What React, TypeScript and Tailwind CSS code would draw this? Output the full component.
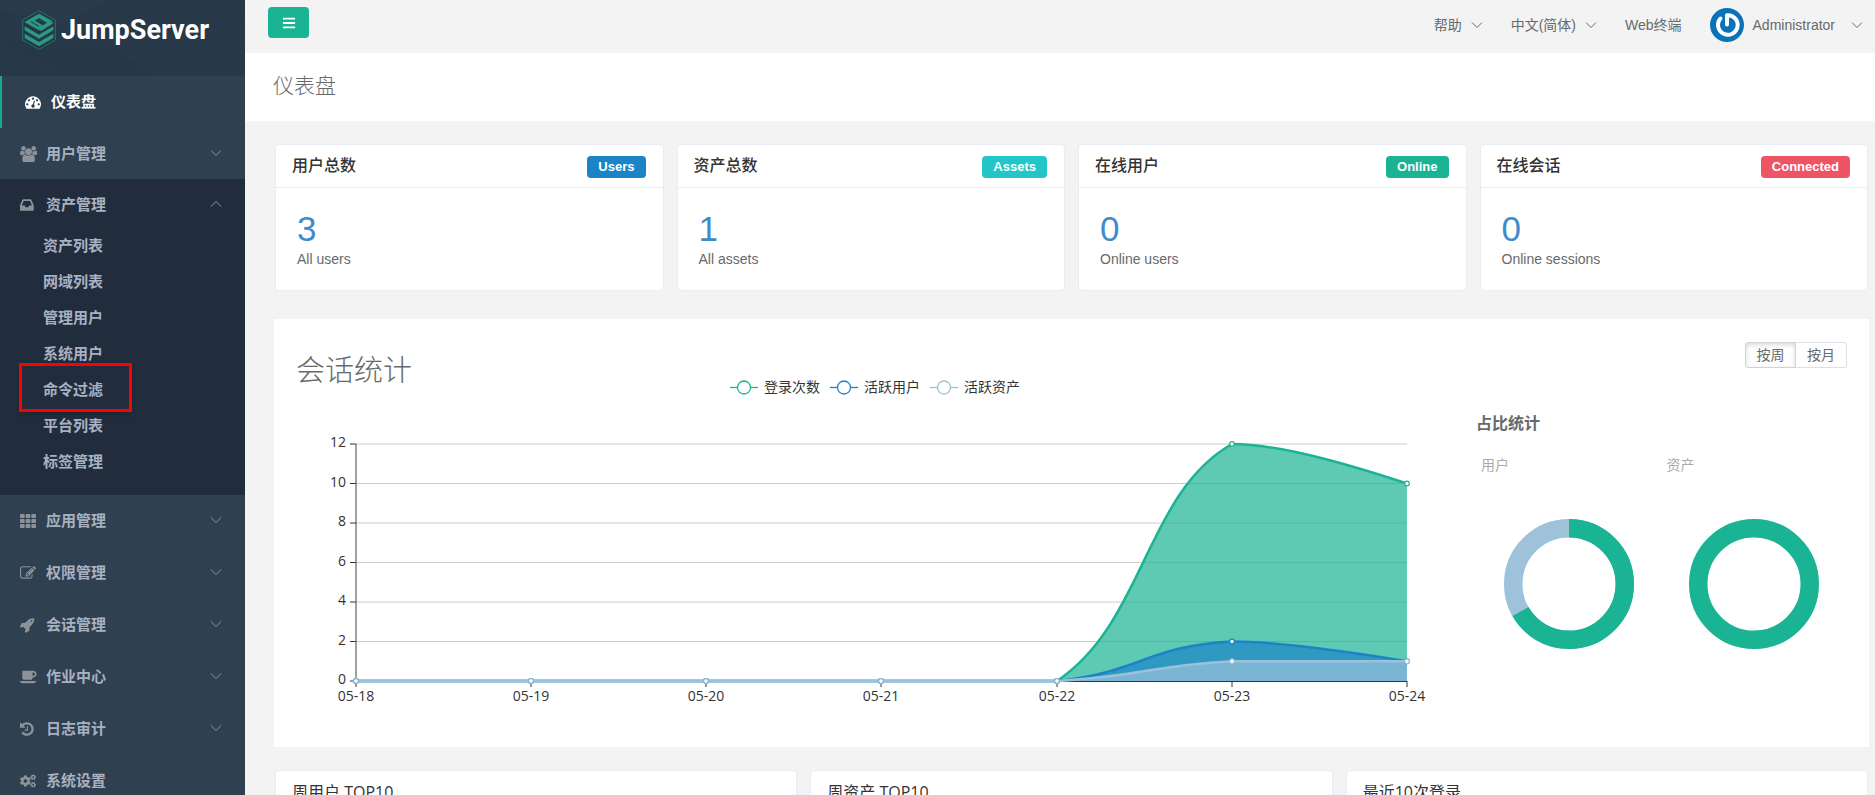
import React from "react";
import { FaTh, FaCogs, FaBars } from "react-icons/fa";

const SANS = "font-['Liberation_Sans','Noto_Sans_CJK_SC',sans-serif]";
const HUMAN = "font-['Open_Sans','Noto_Sans_CJK_SC',sans-serif]";

const glyphs = {
  gauge: {
    box: "0 0 1792 1792",
    d: "M384 1152q0-53-37.500-90.500t-90.500-37.500-90.500 37.500-37.500 90.500 37.500 90.500 90.500 37.500 90.500-37.500 37.500-90.500zm192-448q0-53-37.500-90.500t-90.500-37.500-90.500 37.500-37.500 90.500 37.500 90.500 90.500 37.500 90.500-37.500 37.500-90.500zm428 481l101-382q6-26-7.500-48.500t-38.500-29.500-48 6.500-30 39.500l-101 382q-60 5-107 43.500t-63 98.500q-20 77 20 146t117 89 146-20 89-117q16-60-6-117t-72-91zm660-33q0-53-37.500-90.500t-90.500-37.500-90.500 37.500-37.500 90.500 37.500 90.500 90.500 37.500 90.500-37.500 37.500-90.500zm-640-640q0-53-37.500-90.500t-90.500-37.500-90.500 37.500-37.500 90.500 37.500 90.500 90.500 37.500 90.500-37.500 37.500-90.500zm448 192q0-53-37.500-90.500t-90.500-37.500-90.500 37.500-37.500 90.500 37.500 90.500 90.500 37.500 90.500-37.500 37.500-90.500zm320 448q0 261-141 483-19 29-54 29h-1402q-35 0-54-29-141-221-141-483 0-182 71-348t191-286 286-191 348-71 348 71 286 191 191 286 71 348z",
  },
  users: {
    box: "0 0 1920 1792",
    d: "M593 896q-162 5-265 128h-134q-82 0-138-40.500t-56-118.500q0-353 124-353 6 0 43.500 21t97.500 42.500 119 21.500q67 0 133-23-5 37-5 66 0 139 81 256zm1071 637q0 120-73 189.500t-194 69.500h-874q-121 0-194-69.500t-73-189.500q0-53 3.500-103.500t14-109 26.500-108.500 43-97.500 62-81 85.500-53.500 111.500-20q10 0 43 21.500t73 48 107 48 135 21.500 135-21.500 107-48 73-48 43-21.500q61 0 111.500 20t85.500 53.500 62 81 43 97.500 26.500 108.500 14 109 3.500 103.500zm-1024-1277q0 106-75 181t-181 75-181-75-75-181 75-181 181-75 181 75 75 181zm704 384q0 159-112.500 271.500t-271.500 112.500-271.500-112.500-112.500-271.500 112.500-271.500 271.500-112.500 271.500 112.500 112.500 271.500zm576 225q0 78-56 118.500t-138 40.500h-134q-103-123-265-128 81-117 81-256 0-29-5-66 66 23 133 23 59 0 119-21.500t97.500-42.500 43.500-21q124 0 124 353zm-128-609q0 106-75 181t-181 75-181-75-75-181 75-181 181-75 181 75 75 181z",
  },
  inbox: {
    box: "128 0 1792 1792",
    d: "M1151 960h316q-1-3-2.500-8.500t-2.500-7.500l-212-496h-708l-212 496q-1 3-2.500 8.500t-2.500 7.500h316l95 192h320zm513 30v482q0 26-19 45t-45 19h-1408q-26 0-45-19t-19-45v-482q0-62 25-123l238-552q10-25 36.500-42t52.500-17h832q26 0 52.500 17t36.500 42l238 552q25 61 25 123z",
  },
  edit: {
    box: "0 0 1792 1792",
    d: "M888 1184l116-116-152-152-116 116v56h96v96h56zm440-720q-16-16-33 1l-350 350q-17 17-1 33t33-1l350-350q17-17 1-33zm80 594v190q0 119-84.500 203.500t-203.500 84.500h-832q-119 0-203.500-84.500t-84.500-203.500v-832q0-119 84.500-203.500t203.500-84.500h832q63 0 117 25 15 7 18 23 3 17-9 29l-49 49q-14 14-32 8-23-6-45-6h-832q-66 0-113 47t-47 113v832q0 66 47 113t113 47h832q66 0 113-47t47-113v-126q0-13 9-22l64-64q15-15 35-7t20 29zm-96-738l288 288-672 672h-288v-288zm444 132l-92 92-288-288 92-92q28-28 68-28t68 28l152 152q28 28 28 68t-28 68z",
  },
  rocket: {
    box: "64 0 1792 1792",
    d: "M1440 448q0-40-28-68t-68-28-68 28-28 68 28 68 68 28 68-28 28-68zm224-288q0 249-75.500 430.500t-253.500 360.500q-81 80-195 176l-20 379q-2 16-16 26l-384 224q-7 4-16 4-12 0-23-9l-64-64q-13-14-8-32l85-276-281-281-276 85q-3 1-9 1-14 0-23-9l-64-64q-17-19-5-39l224-384q10-14 26-16l379-20q96-114 176-195 188-187 358-258t431-71q14 0 24 9.500t10 22.500z",
  },
  coffee: {
    box: "0 0 1920 1792",
    d: "M1664 576q0-80-56-136t-136-56h-64v384h64q80 0 136-56t56-136zm-1664 768h1792q0 106-75 181t-181 75h-1280q-106 0-181-75t-75-181zm1856-768q0 159-112.500 271.500t-271.500 112.500h-64v32q0 92-66 158t-158 66h-704q-92 0-158-66t-66-158v-736q0-26 19-45t45-19h1152q159 0 271.500 112.500t112.500 271.500z",
  },
  history: {
    box: "128 0 1792 1792",
    d: "M1664 896q0 156-61 298t-164 245-245 164-298 61q-172 0-327-72.500t-264-204.500q-7-10-6.500-22.500t8.500-20.500l137-138q10-9 25-9 16 2 23 12 73 95 179 147t225 52q104 0 198.500-40.500t163.500-109.500 109.500-163.500 40.500-198.500-40.500-198.500-109.500-163.500-163.500-109.500-198.500-40.500q-98 0-188 35.500t-160 101.500l137 138q31 30 14 69-17 40-59 40h-448q-26 0-45-19t-19-45v-448q0-42 40-59 39-17 69 14l130 129q107-101 244.500-156.500t284.500-55.500q156 0 298 61t245 164 164 245 61 298zm-640-288v448q0 14-9 23t-23 9h-320q-14 0-23-9t-9-23v-64q0-14 9-23t23-9h224v-352q0-14 9-23t23-9h64q14 0 23 9t9 23z",
  },
};

function Glyph({ name }: { name: keyof typeof glyphs }) {
  const g = glyphs[name];
  return (
    <svg className="h-4 w-auto" viewBox={g.box} fill="currentColor" aria-hidden="true">
      <path d={g.d} />
    </svg>
  );
}

function Chevron({ up = false }: { up?: boolean }) {
  return (
    <svg width="12" height="8" viewBox="0 0 12 8" fill="none" stroke="currentColor" strokeWidth="1" aria-hidden="true">
      <path d={up ? "M1 6.5 6 1.5 11 6.5" : "M1 1.5 6 6.5 11 1.5"} />
    </svg>
  );
}

function Logo() {
  return (
    <svg width="34" height="40" viewBox="0 0 102 120" fill="none" aria-hidden="true">
      <path d="M51 2 100 30V90L51 118 2 90V30Z" stroke="#23746b" strokeWidth="3" />
      <path
        d="M8 36 51 11 92 34 80 41 51 24 38 32 62 46Q68 50 62 54L51 61 8 37ZM26 36 50 50 52 48 28 34Z"
        fill="#2a9a80"
        fillRule="evenodd"
      />
      <path d="M62 46 84 34 94 40 57 63 45 56Z" fill="#2a9a80" />
      <path d="M8 49 51 74 94 49V61L51 86 8 61Z" fill="#2a9a80" />
      <path d="M8 71 51 96 94 71V84L51 109 8 84Z" fill="#2a9a80" />
    </svg>
  );
}

function Avatar() {
  return (
    <svg width="34" height="34" viewBox="0 0 34 34" fill="none" aria-hidden="true">
      <circle cx="17" cy="17" r="17" fill="#0a73b8" />
      <path d="M10.500 10.500a9.800 9.800 0 1 0 6.500-3.300v9.300" stroke="#fff" strokeWidth="4" strokeLinecap="round" strokeLinejoin="round" />
    </svg>
  );
}

const assetItems = ["资产列表", "网域列表", "管理用户", "系统用户", "命令过滤", "平台列表", "标签管理"];

function NavRow({ icon, label, chevron }: { icon: React.ReactNode; label: string; chevron?: "up" | "down" }) {
  return (
    <a href="#" className="flex h-[52px] items-center pr-[23px] pl-5 text-[#a7b1c2]">
      <span className="w-[26px] text-[#8d9299]">{icon}</span>
      <span className="flex-1">{label}</span>
      {chevron && (
        <span className="pb-[3px] text-[#8d97a3]">
          <Chevron up={chevron === "up"} />
        </span>
      )}
    </a>
  );
}

function Sidebar() {
  return (
    <aside className="w-[245px] shrink-0 overflow-hidden bg-[#2f4050] text-[15px] font-semibold">
      <div className="relative h-[76px] overflow-hidden bg-[#273848]">
        <svg className="absolute inset-0 h-full w-full" viewBox="0 0 245 76" preserveAspectRatio="none" aria-hidden="true">
          <path d="M0 0H110L60 26 0 10Z" fill="#293a4a" />
          <path d="M120 52 152 76H245V20Z" fill="#283a49" />
          <path d="M0 40 70 76H152L120 52Z" fill="#263747" />
        </svg>
        <a href="#" className="relative flex items-center gap-[5px] pt-[10px] pl-[22px] text-white">
          <Logo />
          <span className="font-['Roboto',sans-serif] text-[27px] leading-8 font-bold">JumpServer</span>
        </a>
      </div>
      <nav>
        <a href="#" className="flex h-[52px] items-center border-l-2 border-[#19aa8d] pl-[23px] text-white">
          <span className="w-[26px]">
            <Glyph name="gauge" />
          </span>
          仪表盘
        </a>
        <NavRow icon={<Glyph name="users" />} label="用户管理" chevron="down" />
        <div className="relative -mt-px bg-[#212d3c] pb-[15px]">
          <NavRow icon={<Glyph name="inbox" />} label="资产管理" chevron="up" />
          <ul className="-mt-[3px]">
            {assetItems.map((item) => (
              <li key={item} className="relative">
                <a href="#" className="flex h-9 items-center pl-[43px] text-[#a7b1c2]">
                  {item}
                </a>
                {item === "命令过滤" && (
                  <span className="pointer-events-none absolute -top-[9px] left-[19px] h-[49px] w-[113px] border-3 border-[#fe0000] shadow-md" />
                )}
              </li>
            ))}
          </ul>
        </div>
        <NavRow icon={<FaTh size={16} />} label="应用管理" chevron="down" />
        <NavRow icon={<Glyph name="edit" />} label="权限管理" chevron="down" />
        <NavRow icon={<Glyph name="rocket" />} label="会话管理" chevron="down" />
        <NavRow icon={<Glyph name="coffee" />} label="作业中心" chevron="down" />
        <NavRow icon={<Glyph name="history" />} label="日志审计" chevron="down" />
        <NavRow icon={<FaCogs size={16} />} label="系统设置" />
      </nav>
    </aside>
  );
}

function TopBar() {
  return (
    <header className="flex h-[53px] items-start justify-between pt-[7px] pr-3 pl-[23px] text-sm text-[#676a6c]">
      <button type="button" aria-label="菜单" className="flex h-[31px] w-[41px] items-center justify-center rounded bg-[#1ab394] text-white">
        <FaBars size={14} />
      </button>
      <div className="flex h-9 items-center gap-7">
        <button type="button" className="flex items-center gap-[9px]">
          帮助 <Chevron />
        </button>
        <button type="button" className="flex items-center gap-[9px]">
          中文(简体) <Chevron />
        </button>
        <a href="#">Web终端</a>
        <button type="button" className="flex items-center gap-[9px]">
          <Avatar />
          Administrator
          <span className="ml-[7px]">
            <Chevron />
          </span>
        </button>
      </div>
    </header>
  );
}

const stats = [
  { title: "用户总数", badge: "Users", color: "bg-[#1c84c6]", value: 3, note: "All users" },
  { title: "资产总数", badge: "Assets", color: "bg-[#23c6c8]", value: 1, note: "All assets" },
  { title: "在线用户", badge: "Online", color: "bg-[#1ab394]", value: 0, note: "Online users" },
  { title: "在线会话", badge: "Connected", color: "bg-[#ed5565]", value: 0, note: "Online sessions" },
];

function StatCard({ title, badge, color, value, note }: (typeof stats)[number]) {
  return (
    <section className="rounded border border-[#e9ecf4] bg-white">
      <div className="flex h-[43px] items-center justify-between border-b border-[#e9ecf4] pr-[17px] pl-4">
        <h2 className="text-base leading-5 font-medium text-[#333]">{title}</h2>
        <span className={`mt-[2px] rounded px-[11px] text-[13px] leading-[22px] font-bold text-white ${color}`}>{badge}</span>
      </div>
      <div className="px-[21px] pt-[23px] pb-[21px]">
        <a href="#" className="block text-[35px] leading-9 text-[#428bca]">
          {value}
        </a>
        <p className="mt-[2px] text-sm leading-5 text-[#676a6c]">{note}</p>
      </div>
    </section>
  );
}

const legend = [
  { label: "登录次数", color: "#1ab394" },
  { label: "活跃用户", color: "#1c84c6" },
  { label: "活跃资产", color: "#9bc1db" },
];

const days = ["05-18", "05-19", "05-20", "05-21", "05-22", "05-23", "05-24"];
const dayX = [60, 235, 410, 585, 761, 936, 1111];
const ticks = [0, 2, 4, 6, 8, 10, 12];
const yOf = (v: number) => 284 - v * 19.75;

const series = [
  { color: "#1ab394", peak: 12, end: 10 },
  { color: "#1c84c6", peak: 2, end: 1 },
  { color: "#9bc1db", peak: 1, end: 1 },
];

function SessionChart() {
  return (
    <svg className="block h-auto w-full" viewBox="0 0 1158 320" role="img" aria-label="会话统计">
      {ticks.map((v) => (
        <g key={v}>
          <line x1="60" x2="1111" y1={yOf(v)} y2={yOf(v)} stroke="#ccc" />
          <line x1="54" x2="60" y1={yOf(v)} y2={yOf(v)} stroke="#333" />
          <text x="50" y={yOf(v) + 3} textAnchor="end" className="fill-[#333] text-sm">
            {v}
          </text>
        </g>
      ))}
      <line x1="60" x2="60" y1="47" y2="284" stroke="#444" />
      <line x1="60" x2="1111" y1="284.500" y2="284.500" stroke="#333" />
      {days.map((d, i) => (
        <g key={d}>
          <line x1={dayX[i]} x2={dayX[i]} y1="284" y2="290" stroke="#333" />
          <text x={dayX[i]} y="304" textAnchor="middle" className="fill-[#333] text-sm">
            {d}
          </text>
        </g>
      ))}
      {series.map((s) => {
        const p = yOf(s.peak);
        const e = yOf(s.end);
        const c1 = 284 - (284 - p) / 4;
        const c2 = p + (284 - e) / 4;
        const line = `M60 284H761C849 ${c1} 849 ${c2} 936 ${p}C992 ${p} 1080 ${e - (e - p) / 4} 1111 ${e}`;
        return (
          <g key={s.color + s.peak}>
            <path d={`${line}V284H60Z`} fill={s.color} fillOpacity="0.7" />
            <path d={line} fill="none" stroke={s.color} strokeWidth="2.500" />
          </g>
        );
      })}
      {series.map((s) =>
        dayX.map((x, i) => {
          const y = i < 5 ? 284 : yOf(i === 5 ? s.peak : s.end);
          return <circle key={`${s.peak}-${s.color}-${x}`} cx={x} cy={y} r="2.300" fill="#fff" stroke={s.color} strokeWidth="1.200" />;
        }),
      )}
    </svg>
  );
}

function Donut({ share }: { share: number }) {
  const r = 55.75;
  const c = 2 * Math.PI * r;
  return (
    <svg width="130" height="130" viewBox="0 0 130 130" role="img" aria-label="占比">
      {share < 1 && <circle cx="65" cy="65" r={r} fill="none" stroke="#9dc2da" strokeWidth="18.500" />}
      <circle
        cx="65"
        cy="65"
        r={r}
        fill="none"
        stroke="#1ab394"
        strokeWidth="18.500"
        strokeDasharray={share < 1 ? `${c * share} ${c}` : undefined}
        transform="rotate(-90 65 65)"
      />
    </svg>
  );
}

function SessionPanel() {
  return (
    <section className="-mx-px mt-7 grid grid-cols-[1158fr_393fr] bg-white px-[22px] pt-[23px] pb-[30px]">
      <div className={`pt-3 ${HUMAN}`}>
        <div className="grid h-[43px] grid-cols-[1fr_auto_1fr]">
          <h1 className="text-[29px] leading-8 font-light text-[#676a6c]">会话统计</h1>
          <ul className="flex items-center gap-[10px] self-end text-sm leading-5 text-[#333]">
            {legend.map((l) => (
              <li key={l.label} className="flex items-center gap-[6px]">
                <svg width="28" height="16" viewBox="0 0 28 16" stroke={l.color} fill="#fff" aria-hidden="true">
                  <path d="M0 8.500H28" strokeWidth="1.300" />
                  <circle cx="14" cy="8.500" r="6.500" strokeWidth="1.300" />
                </svg>
                {l.label}
              </li>
            ))}
          </ul>
        </div>
        <SessionChart />
      </div>
      <div className="pl-[22px]">
        <div className="flex justify-end text-sm text-[#676a6c]">
          <button type="button" className="h-[26px] w-[51px] rounded-l-[3px] border border-[#d2d2d2] text-sm shadow-[inset_0_2px_5px_rgba(0,0,0,0.15)]">
            按周
          </button>
          <button type="button" className="h-[26px] w-[51px] rounded-r-[3px] border border-l-0 border-[#dcdfe8] text-sm">
            按月
          </button>
        </div>
        <h2 className="mt-[46px] text-base leading-5 font-bold text-[#676a6c]">占比统计</h2>
        <div className="mt-[21px] grid grid-cols-2 text-sm leading-5 text-[#aaa]">
          <div>
            <h3 className="pl-[5px]">用户</h3>
            <div className="mt-11 flex justify-center">
              <Donut share={2 / 3} />
            </div>
          </div>
          <div>
            <h3 className="pl-[5px]">资产</h3>
            <div className="mt-11 flex justify-center">
              <Donut share={1} />
            </div>
          </div>
        </div>
      </div>
    </section>
  );
}

export default function App() {
  return (
    <div className={`flex h-screen overflow-hidden bg-[#f3f3f3] ${SANS}`}>
      <Sidebar />
      <div className="min-w-0 flex-1 overflow-y-auto [scrollbar-width:none]">
        <TopBar />
        <div className="flex h-[68px] items-center bg-white pb-[2px] pl-7">
          <p className="text-[21px] leading-7 font-light text-[#676a6c]">仪表盘</p>
        </div>
        <main className="pt-[23px] pr-[7px] pb-6 pl-[30px]">
          <div className="grid grid-cols-4 gap-[13px]">
            {stats.map((s) => (
              <StatCard key={s.title} {...s} />
            ))}
          </div>
          <SessionPanel />
          <div className={`mt-[23px] grid grid-cols-3 gap-[13px] ${HUMAN}`}>
            {["周用户 TOP10", "周资产 TOP10", "最近10次登录"].map((t) => (
              <section key={t} className="rounded border border-[#e9ecf4] bg-white px-4 pt-[11px] pb-4">
                <h2 className="text-base leading-5 text-[#333]">{t}</h2>
              </section>
            ))}
          </div>
        </main>
      </div>
    </div>
  );
}
